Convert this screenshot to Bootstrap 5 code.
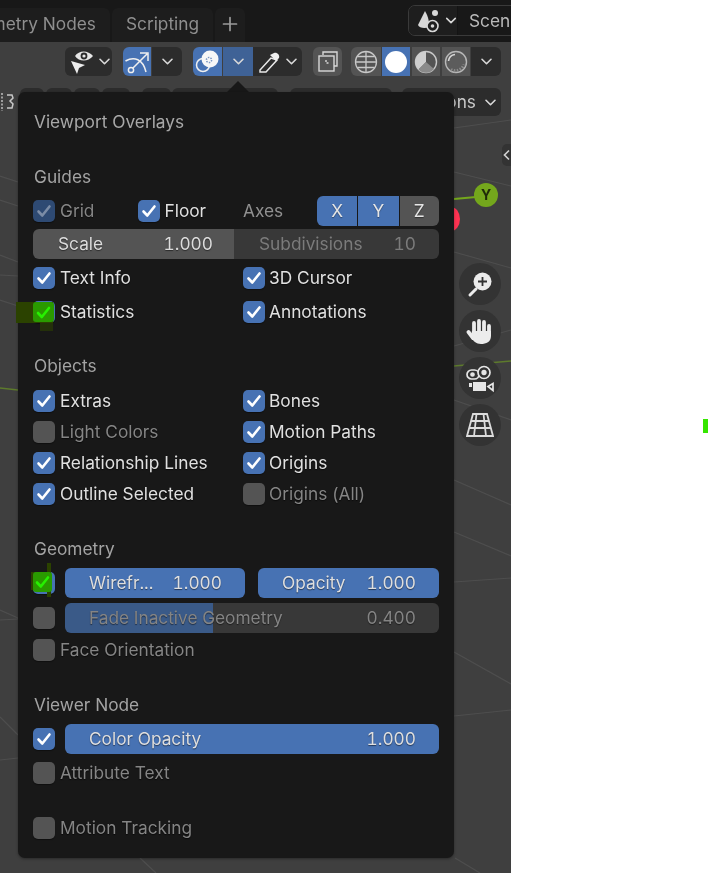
<!DOCTYPE html>
<html lang="en"><head><meta charset="utf-8"><title>Viewport Overlays</title>
<link href="https://cdn.jsdelivr.net/npm/bootstrap@5.3.0/dist/css/bootstrap.min.css" rel="stylesheet">
<style>
html,body{margin:0;height:873px;overflow:hidden;background:#fff}
body{font-family:Inter,"Liberation Sans",sans-serif;font-size:17.3px;color:#dcdcdc;line-height:22px}
.app{width:511px;height:873px;background:#3f3f3f;overflow:hidden;filter:blur(.35px)}
.scene-lines{left:0;top:0}
.topbar{height:42px;background:#181818}
.wtab{height:34px;background:#1d1d1d;color:#8f8f8f;border-radius:6px 6px 0 0;padding-bottom:3px;white-space:nowrap}
.wt1{width:110px;justify-content:flex-end;padding-right:14px;border-top-left-radius:0}
.wt2{width:101px;margin-left:2px}
.wt3{width:30px;margin-left:2px}
.scenebox{left:408px;top:5px;width:120px;height:31px;border:1px solid #3a3a3a;border-radius:7px;background:#1d1d1d;color:#b9b9b9}
.scene-ico{width:49px;border-right:1px solid #141414;background:#1e1e1e;border-radius:6px 0 0 6px}
.scene-name{padding-left:11px;background:#181818;white-space:nowrap}
.tbtn{top:47px;height:29px;background:#2c2c2c}
.tb-blue{background:#4772b3}
.tb-mid{background:#3f6296}
.tb-gray{background:#545454}
.rl{border-radius:6px 0 0 6px}.rr{border-radius:0 6px 6px 0}.ra{border-radius:6px}
.stub{top:88px;height:28px;background:#2c2c2c;border-radius:6px;color:#c8c8c8}
.panel{left:18px;top:92px;width:436px;height:766px;background:#181818;border-radius:7px;padding:19px 15px 15px;box-shadow:0 1px 3px rgba(0,0,0,.35)}
.tip{left:226px;top:81px;width:0;height:0;border-left:12px solid transparent;border-right:12px solid transparent;border-bottom:12px solid #181818}
.ttl{height:22px;color:#a8a8a8;padding-left:1px}
.sect{height:22px;color:#a3a3a3;padding-left:1px}
.mt-g1{margin-top:33px}.mt-s{margin-top:26px}.mt-m{margin-top:29px}.mt-e{margin-top:8px}
.rowf{height:30px}
.r34{height:34px}.r31{height:31px}
.twoc{display:grid;grid-template-columns:210px 196px}
.chk{width:22px;height:22px;border-radius:5px;background:#545454;flex:none;margin-right:5px;box-shadow:0 1px 1px rgba(0,0,0,.4)}
.twoc>div:nth-child(even) .chk{margin-right:4px}
.chk.on{background:#4772b3}
.chk.dimon{background:#2e4a73}
.lbl{color:#e0e0e0;text-shadow:0 1px 1px rgba(0,0,0,.6);white-space:nowrap;flex:none}
.lbl.off{color:#858585}
.fl{margin-left:77.5px}
.flw{width:78.500px}
.axes{color:#909090;width:74px;flex:none}
.xyz{width:122px;height:30px;border-radius:6px;overflow:hidden;flex:none}
.axb{background:#4772b3;color:#e6e6e6;height:100%;text-shadow:0 1px 1px rgba(0,0,0,.4)}
.axb+.axb{margin-left:1px}
.axb.z{background:#545454}
.mt-sl{margin-top:3px}
.fieldL,.fieldR,.sld{height:30px;padding:0 23px 0 25px;white-space:nowrap;font-variant-numeric:tabular-nums}
.fieldL{width:201px;background:#545454;border-radius:6px 0 0 6px;color:#dcdcdc;padding-right:21px;text-shadow:0 1px 1px rgba(0,0,0,.5)}
.fieldR{width:205px;background:#383838;border-radius:0 6px 6px 0;color:#7b7b7b}
.sld{border-radius:6px;background:linear-gradient(90deg,var(--a) var(--f),var(--b) var(--f));color:#dfdfdf;--a:#4772b3;--b:#4772b3;text-shadow:0 1px 1px rgba(0,0,0,.5);padding-left:24px}
.sld.dim{--a:#3a5a88;--b:#383838;color:#848484}
.w180{width:180px;margin-left:5px}.w181{width:181px;margin-left:13px}.w374{width:374px;margin-left:5px}
.mt-5px{margin-top:5px}.mt-2px{margin-top:2px}.mt-4px{margin-top:4px}.mt-25{margin-top:25px}
.navb{left:459px;width:42px;height:42px;border-radius:50%;background:#333}
.gy{left:474px;top:183px;width:24px;height:24px;border-radius:50%;background:#74a71c;color:#1f2a08;font-size:14px;font-weight:700}
.gr{left:442px;top:207px;width:18px;height:24px;border-radius:50%;background:#ff3352}
.ctab{left:502px;top:144px;width:12px;height:22px;background:#333;border-radius:5px 0 0 5px;color:#c8c8c8}
.mark1{left:16px;top:302px;width:37px;height:21px;background:#2b4200}
.mark1b{left:40px;top:323px;width:13px;height:8px;background:#24300a}
.mark2a{left:47px;top:563px;width:4px;height:34px;background:#2b4200}
.mark2b{left:31px;top:572px;width:4px;height:18px;background:#2b4200}
.gcheck{width:21px;height:20px;background:#2a9a00;top:302px;left:33px;border-radius:3px}
.gcheck2{width:19px;height:20px;background:#2a9a00;top:572px;left:33px;border-radius:3px}
.gmark{left:703px;top:419px;width:5px;height:14px;background:#36e600}
.clip{left:0;top:0;width:511px;height:873px;overflow:hidden}
</style></head>
<body>
<svg width="0" height="0" class="position-absolute"><defs>
<symbol id="tick" viewBox="0 0 22 22"><path d="M5.500 11.500l3.800 4 7.200-9" fill="none" stroke="#fff" stroke-width="2.600" stroke-linecap="round" stroke-linejoin="round"/></symbol>
<symbol id="dimtick" viewBox="0 0 22 22"><path d="M5.500 11.500l3.800 4 7.200-9" fill="none" stroke="#7b8ca6" stroke-width="2.600" stroke-linecap="round" stroke-linejoin="round"/></symbol>
<symbol id="chev" viewBox="0 0 14 10"><path d="M2 2.500l5 5 5-5" fill="none" stroke="#d8d8d8" stroke-width="1.800" stroke-linecap="round" stroke-linejoin="round"/></symbol>
</defs></svg>

<div class="app position-relative">
  <svg class="scene-lines position-absolute" width="511" height="873" viewBox="0 0 511 873">
    <g stroke="#4e4e4e" stroke-width="1.200" fill="none">
      <path d="M0 176L18 182M0 200L18 206M0 255L18 262M0 275L18 276M0 300L18 306M0 610L18 618M0 620L18 619M0 717L18 735M0 760L18 758M140 858L156 873M455 858L480 873"/>
      <path d="M454 172L511 186M454 252L511 268M454 346L511 330M454 400L511 420M454 480L511 505M454 532L511 556M454 582L511 578M454 652L511 684M454 716L511 710M454 128L511 120"/>
    </g>
    <path d="M0 388L18 390" stroke="#5d7a2c" stroke-width="1.300"/>
    <path d="M454 366L511 361" stroke="#5d7a2c" stroke-width="1.300"/>
    <path d="M454 199L476 197" stroke="#74a71c" stroke-width="2"/>
  </svg>

  <div class="topbar position-relative d-flex align-items-end">
    <div class="wtab wt1 d-flex align-items-center">metry Nodes</div>
    <div class="wtab wt2 d-flex align-items-center justify-content-center">Scripting</div>
    <div class="wtab wt3 d-flex align-items-center justify-content-center">
      <svg width="16" height="16" viewBox="0 0 16 16"><path d="M8 1.500v13M1.500 8h13" stroke="#9a9a9a" stroke-width="1.700" stroke-linecap="round"/></svg>
    </div>
  </div>

  <div class="clip position-absolute">
  <div class="scenebox position-absolute d-flex">
    <div class="scene-ico d-flex align-items-center justify-content-start ps-2 gap-1">
      <svg width="24" height="26" viewBox="0 0 24 26"><path d="M8 3L1 17c1 3 7 4 11 2 0-5 0-9-4-16z" fill="#d8d8d8"/><circle cx="18" cy="5" r="3" fill="#d8d8d8"/><circle cx="15.500" cy="18" r="5.500" fill="#1e1e1e" stroke="#d8d8d8" stroke-width="1.600"/><circle cx="15.500" cy="18" r="1.800" fill="#d8d8d8"/></svg>
      <svg width="12" height="9"><use href="#chev"/></svg>
    </div>
    <div class="scene-name d-flex align-items-center">Scene</div>
  </div>

  <div class="tbtn ra position-absolute d-flex align-items-center" style="left:65px;width:47px">
    <svg class="ms-1" width="25" height="26" viewBox="0 0 25 26"><path d="M6 7c4-6 13-6 18 0-5 6-14 6-18 0z" fill="#e6e6e6"/><circle cx="15" cy="7" r="3.400" fill="#2c2c2c"/><circle cx="15" cy="7" r="1.600" fill="#e6e6e6"/><path d="M2 12l14 4-6 3-2 6z" fill="#ececec"/></svg>
    <svg class="ms-1" width="13" height="9"><use href="#chev"/></svg>
  </div>

  <div class="tbtn rl tb-blue position-absolute d-flex align-items-center justify-content-center" style="left:123px;width:28px">
    <svg width="26" height="26" viewBox="0 0 26 26" fill="none" stroke="#f0f0f0" stroke-width="1.500"><path d="M1.500 12C10 7 19 10 22 23"/><circle cx="7" cy="21" r="2.600"/><path d="M9 19L23 5M16 4h8v8"/></svg>
  </div>
  <div class="tbtn rr position-absolute d-flex align-items-center justify-content-center" style="left:152px;width:30px"><svg width="13" height="9"><use href="#chev"/></svg></div>

  <div class="tbtn rl tb-blue position-absolute d-flex align-items-center justify-content-center" style="left:193px;width:29px">
    <svg width="25" height="25" viewBox="0 0 25 25"><circle cx="8" cy="16" r="6.500" fill="none" stroke="#f0f0f0" stroke-width="1.500"/><circle cx="15" cy="10" r="8.500" fill="#f7f7f7"/><circle cx="14" cy="11" r="2.600" fill="none" stroke="#7c98c4" stroke-width="1.500" stroke-dasharray="1.500 1.200"/></svg>
  </div>
  <div class="tbtn tb-mid position-absolute d-flex align-items-center justify-content-center" style="left:223px;width:30px"><svg width="13" height="9"><use href="#chev"/></svg></div>
  <div class="tbtn rr position-absolute d-flex align-items-center" style="left:253px;width:49px">
    <svg class="ms-1" width="24" height="24" viewBox="0 0 24 24"><path d="M14 8L3 20v2h6l11-12z" fill="none" stroke="#e8e8e8" stroke-width="1.500"/><path d="M13 5l6 6 3-3c1-3-2-6-5-5z" fill="#f0f0f0"/></svg>
    <svg class="ms-1" width="13" height="9"><use href="#chev"/></svg>
  </div>

  <div class="tbtn tb-gray ra position-absolute d-flex align-items-center justify-content-center" style="left:313px;width:29px">
    <svg width="24" height="24" viewBox="0 0 24 24" fill="none" stroke="#d8d8d8" stroke-width="1.400"><path d="M7 5V2h14v14h-3"/><rect x="3" y="6" width="15" height="15" fill="#545454"/><path d="M10 10v3h4" stroke-dasharray="2 1.500"/></svg>
  </div>

  <div class="tbtn tb-gray rl position-absolute d-flex align-items-center justify-content-center" style="left:351px;width:30px">
    <svg width="24" height="24" viewBox="0 0 24 24" fill="none" stroke="#c8c8c8" stroke-width="1.300"><circle cx="12" cy="12" r="10.500"/><path d="M1.500 12h21M12 1.500v21M3.500 6.500h17M3.500 17.500h17"/></svg>
  </div>
  <div class="tbtn tb-blue position-absolute d-flex align-items-center justify-content-center" style="left:382px;width:28px">
    <svg width="24" height="24" viewBox="0 0 24 24"><circle cx="12" cy="12" r="11" fill="#fff"/></svg>
  </div>
  <div class="tbtn tb-gray position-absolute d-flex align-items-center justify-content-center" style="left:412px;width:28px">
    <svg width="24" height="24" viewBox="0 0 24 24"><circle cx="12" cy="12" r="10.500" fill="none" stroke="#c8c8c8" stroke-width="1.400"/><path d="M12 1.500A10.500 10.500 0 0 0 4.500 19.500L12 12z" fill="#cfcfcf"/><path d="M4.500 19.500A10.500 10.500 0 0 0 20 19L12 12z" fill="#8a8a8a"/></svg>
  </div>
  <div class="tbtn tb-gray position-absolute d-flex align-items-center justify-content-center" style="left:442px;width:28px">
    <svg width="24" height="24" viewBox="0 0 24 24"><circle cx="12" cy="12" r="10.500" fill="#5c5c5c" stroke="#b8b8b8" stroke-width="1.400"/><path d="M4.500 11a7.500 7.500 0 0 1 6.500-6.500" fill="none" stroke="#d8d8d8" stroke-width="1.600"/><path d="M7 19.500a9 9 0 0 0 13-5" fill="none" stroke="#8c8c8c" stroke-width="3" stroke-dasharray="1.500 1.500"/></svg>
  </div>
  <div class="tbtn rr position-absolute d-flex align-items-center justify-content-center" style="left:471px;width:30px"><svg width="13" height="9"><use href="#chev"/></svg></div>

  <div class="stub position-absolute" style="left:20px;width:24px"></div>
  <div class="stub position-absolute" style="left:46px;width:26px"></div>
  <div class="stub position-absolute" style="left:74px;width:26px"></div>
  <div class="stub position-absolute" style="left:102px;width:28px"></div>
  <div class="stub position-absolute" style="left:142px;width:29px"></div>
  <div class="stub position-absolute" style="left:172px;width:106px"></div>
  <div class="stub position-absolute" style="left:290px;width:102px"></div>
  <div class="stub position-absolute d-flex align-items-center justify-content-end pe-1 gap-2" style="left:402px;width:99px">ons <svg width="13" height="9"><use href="#chev"/></svg></div>

  <svg class="position-absolute" style="left:0;top:92px" width="16" height="22" viewBox="0 0 16 22"><path d="M2 1v18" stroke="#c8c8c8" stroke-width="1.400" stroke-dasharray="2 1.500"/><path d="M7 3h5l1 3-3 3 3 3-1 4H7" fill="none" stroke="#c8c8c8" stroke-width="1.500"/></svg>

  <div class="gr position-absolute"></div>
  <div class="gy position-absolute d-flex align-items-center justify-content-center">Y</div>
  <div class="ctab position-absolute d-flex align-items-center"><svg width="9" height="12" viewBox="0 0 9 12"><path d="M7 1.500L2.500 6 7 10.500" fill="none" stroke="#d0d0d0" stroke-width="1.700"/></svg></div>

  <div class="navb position-absolute d-flex align-items-center justify-content-center" style="top:263px">
    <svg width="30" height="30" viewBox="0 0 30 30"><circle cx="17.500" cy="12.500" r="9" fill="#ececec"/><path d="M17.500 8v9M13 12.500h9" stroke="#333" stroke-width="1.800"/><path d="M5 26l6-6" stroke="#ececec" stroke-width="3" stroke-linecap="round"/></svg>
  </div>
  <div class="navb position-absolute d-flex align-items-center justify-content-center" style="top:310px">
    <svg width="28" height="30" viewBox="0 0 28 30"><g stroke="#ececec" stroke-width="3.800" stroke-linecap="round"><path d="M8 7v10M13 5v10M18 6v10M23 10v8M7 22l-4.500-6"/></g><path d="M6 15h19v5c0 6-5 8-10 8-5 0-8-3-10-7z" fill="#ececec"/></svg>
  </div>
  <div class="navb position-absolute d-flex align-items-center justify-content-center" style="top:357px">
    <svg width="30" height="30" viewBox="0 0 30 30" fill="none" stroke="#e6e6e6" stroke-width="1.700"><rect x="2" y="7" width="12" height="9" rx="4.500"/><circle cx="7.500" cy="11.500" r="1.500" fill="#e6e6e6"/><circle cx="19" cy="9.500" r="6" fill="#333"/><circle cx="19" cy="9.500" r="1.800" fill="#e6e6e6"/><rect x="8" y="19" width="13" height="9" fill="#e6e6e6" stroke="none"/><rect x="4" y="20" width="3" height="4" fill="#e6e6e6" stroke="none"/><path d="M23 23.500l5-3v7z"/></svg>
  </div>
  <div class="navb position-absolute d-flex align-items-center justify-content-center" style="top:404px">
    <svg width="28" height="26" viewBox="0 0 28 26" fill="none" stroke="#dcdcdc" stroke-width="1.800"><path d="M7 2h14l6 22H1zM4.800 9h18.400M3 16h22M10.500 2L8 24M17.500 2l2.500 22"/></svg>
  </div>

  <div class="tip position-absolute"></div>
  <div class="panel position-absolute">
    <div class="ttl d-flex align-items-center">Viewport Overlays</div>

    <div class="sect mt-g1 d-flex align-items-center">Guides</div>
    <div class="rowf mt-e d-flex align-items-center">
      <span class="chk dimon"><svg width="22" height="22" class="d-block"><use href="#dimtick"/></svg></span><span class="lbl off" style="width:0">Grid</span>
      <span class="chk on fl"><svg width="22" height="22" class="d-block"><use href="#tick"/></svg></span><span class="lbl flw">Floor</span>
      <span class="axes">Axes</span>
      <div class="xyz d-flex text-center">
        <div class="axb flex-fill d-flex align-items-center justify-content-center">X</div>
        <div class="axb flex-fill d-flex align-items-center justify-content-center">Y</div>
        <div class="axb z flex-fill d-flex align-items-center justify-content-center">Z</div>
      </div>
    </div>
    <div class="mt-sl d-flex">
      <div class="fieldL d-flex align-items-center justify-content-between"><span>Scale</span><span>1.000</span></div>
      <div class="fieldR d-flex align-items-center justify-content-between"><span>Subdivisions</span><span>10</span></div>
    </div>
    <div class="twoc mt-2px">
      <div class="r34 d-flex align-items-center"><span class="chk on"><svg width="22" height="22" class="d-block"><use href="#tick"/></svg></span><span class="lbl">Text Info</span></div>
      <div class="r34 d-flex align-items-center"><span class="chk on"><svg width="22" height="22" class="d-block"><use href="#tick"/></svg></span><span class="lbl">3D Cursor</span></div>
      <div class="r34 d-flex align-items-center"><span class="chk on"><svg width="22" height="22" class="d-block"><use href="#tick"/></svg></span><span class="lbl">Statistics</span></div>
      <div class="r34 d-flex align-items-center"><span class="chk on"><svg width="22" height="22" class="d-block"><use href="#tick"/></svg></span><span class="lbl">Annotations</span></div>
    </div>

    <div class="sect mt-s d-flex align-items-center">Objects</div>
    <div class="twoc mt-e">
      <div class="r31 d-flex align-items-center"><span class="chk on"><svg width="22" height="22" class="d-block"><use href="#tick"/></svg></span><span class="lbl">Extras</span></div>
      <div class="r31 d-flex align-items-center"><span class="chk on"><svg width="22" height="22" class="d-block"><use href="#tick"/></svg></span><span class="lbl">Bones</span></div>
      <div class="r31 d-flex align-items-center"><span class="chk"></span><span class="lbl off">Light Colors</span></div>
      <div class="r31 d-flex align-items-center"><span class="chk on"><svg width="22" height="22" class="d-block"><use href="#tick"/></svg></span><span class="lbl">Motion Paths</span></div>
      <div class="r31 d-flex align-items-center"><span class="chk on"><svg width="22" height="22" class="d-block"><use href="#tick"/></svg></span><span class="lbl">Relationship Lines</span></div>
      <div class="r31 d-flex align-items-center"><span class="chk on"><svg width="22" height="22" class="d-block"><use href="#tick"/></svg></span><span class="lbl">Origins</span></div>
      <div class="r31 d-flex align-items-center"><span class="chk on"><svg width="22" height="22" class="d-block"><use href="#tick"/></svg></span><span class="lbl">Outline Selected</span></div>
      <div class="r31 d-flex align-items-center"><span class="chk"></span><span class="lbl off">Origins (All)</span></div>
    </div>

    <div class="sect mt-m d-flex align-items-center">Geometry</div>
    <div class="rowf mt-e d-flex align-items-center">
      <span class="chk on"><svg width="22" height="22" class="d-block"><use href="#tick"/></svg></span>
      <div class="sld w180 d-flex align-items-center justify-content-between" style="--f:100%"><span>Wirefr...</span><span>1.000</span></div>
      <div class="sld w181 d-flex align-items-center justify-content-between" style="--f:100%"><span>Opacity</span><span>1.000</span></div>
    </div>
    <div class="rowf mt-5px d-flex align-items-center">
      <span class="chk"></span>
      <div class="sld dim w374 d-flex align-items-center justify-content-between" style="--f:39.6%"><span>Fade Inactive Geometry</span><span>0.400</span></div>
    </div>
    <div class="rowf mt-2px d-flex align-items-center"><span class="chk"></span><span class="lbl off">Face Orientation</span></div>

    <div class="sect mt-m d-flex align-items-center">Viewer Node</div>
    <div class="rowf mt-e d-flex align-items-center">
      <span class="chk on"><svg width="22" height="22" class="d-block"><use href="#tick"/></svg></span>
      <div class="sld w374 d-flex align-items-center justify-content-between" style="--f:100%"><span>Color Opacity</span><span>1.000</span></div>
    </div>
    <div class="rowf mt-4px d-flex align-items-center"><span class="chk"></span><span class="lbl off">Attribute Text</span></div>
    <div class="rowf mt-25 d-flex align-items-center"><span class="chk"></span><span class="lbl off">Motion Tracking</span></div>
  </div>

  <div class="mark1 position-absolute"></div>
  <div class="mark1b position-absolute"></div>
  <div class="gcheck position-absolute"><svg width="22" height="22" class="d-block"><path d="M5 11l3.800 4 7.200-9" fill="none" stroke="#27f000" stroke-width="2.600" stroke-linecap="round" stroke-linejoin="round"/></svg></div>
  <div class="mark2a position-absolute"></div>
  <div class="mark2b position-absolute"></div>
  <div class="gcheck2 position-absolute"><svg width="20" height="20" class="d-block"><path d="M4 10.500l3.800 4 7.200-9" fill="none" stroke="#27f000" stroke-width="2.600" stroke-linecap="round" stroke-linejoin="round"/></svg></div>
  </div>
</div>
<div class="gmark position-absolute"></div>
<script src="https://cdn.jsdelivr.net/npm/bootstrap@5.3.0/dist/js/bootstrap.bundle.min.js"></script>
</body></html>
